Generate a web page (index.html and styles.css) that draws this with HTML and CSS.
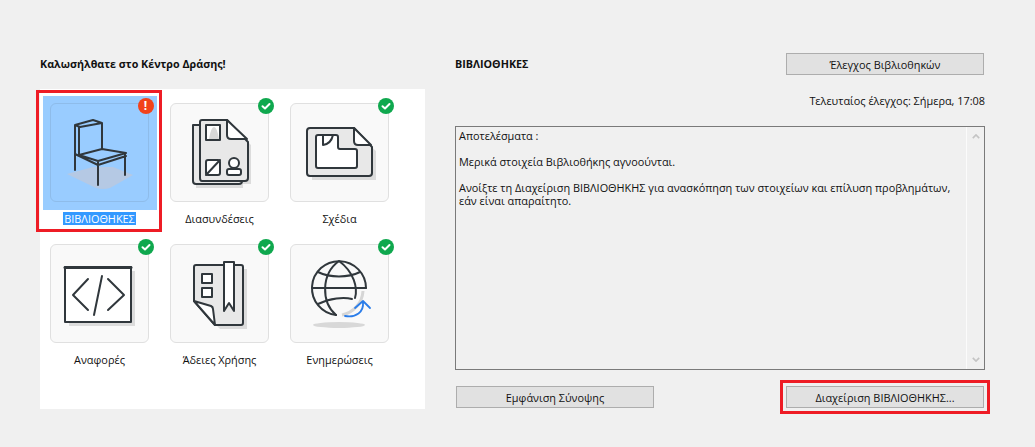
FILE: index.html
```html
<!DOCTYPE html>
<html lang="el">
<head>
<meta charset="utf-8">
<title>Κέντρο Δράσης</title>
<link rel="stylesheet" href="styles.css">
</head>
<body>
<main class="page">
  <section class="left">
    <h1 class="title left-title">Καλωσήλθατε στο Κέντρο Δράσης!</h1>
    <div class="panel">
      <div class="tile selected">
        <div class="card">
          <svg class="icon" viewBox="0 0 99 99">
            <path class="shadow-chair" d="M17 71 43 64H63L83 72 60 85Q53 87 46 85Z"/>
            <g class="ln">
              <path d="M25 22 43 17 52 20 30 24ZM25 22V67M29 24V52M52 20V46"/>
              <path d="M29 52 52 46 76 50 48 58ZM25 51 48 62 76 53M48 58V62M48 62V82M75 51V72"/>
            </g>
          </svg>
          <span class="badge badge-err">!</span>
        </div>
        <span class="label"><span class="label-sel">ΒΙΒΛΙΟΘΗΚΕΣ</span></span>
        <span class="redbox"></span>
      </div>
      <div class="tile">
        <div class="card">
          <svg class="icon" viewBox="0 0 99 99">
            <path class="sh" d="M33 21H59L81 42V81H73V85H26V81H33Z"/>
            <g class="ln">
              <path class="fg" d="M30 22H23V78Q23 81 26 81H69Q72 81 72 78"/>
              <path class="fg" d="M32 17H57L78 39V75Q78 78 75 78H32Q30 78 30 75V19Q30 17 32 17Z"/>
              <path class="fw" d="M57 17V32Q57 36 61 36H77Z"/>
              <rect class="fw" x="36" y="22" width="14" height="15"/>
              <rect class="fw" x="36" y="57" width="14" height="15" rx="2"/>
              <path d="M36 72 50 57"/>
              <circle class="fw" cx="64" cy="60" r="5"/>
              <rect class="fw" x="57" y="66" width="14" height="6" rx="2"/>
            </g>
            <path class="gr" d="M39 36Q41 24 44 24 47 24 49 36Z"/>
          </svg>
          <span class="badge badge-ok"><svg viewBox="0 0 16 16"><path d="M4.5 8.2 7 10.5 11.5 6"/></svg></span>
        </div>
        <span class="label">Διασυνδέσεις</span>
      </div>
      <div class="tile">
        <div class="card">
          <svg class="icon" viewBox="0 0 99 99">
            <path class="sh" d="M22 30H66L86 48V77H22Z"/>
            <g class="ln">
              <path class="fg" d="M20 25H64L82 44V70Q82 73 79 73H20Q17 73 17 70V28Q17 25 20 25Z"/>
              <path class="fw" d="M64 25V38Q64 42 68 42H81Z"/>
              <path class="fw" d="M28 32H46Q48 32 48 34V44Q48 46 50 46H65Q67 46 67 48V63Q67 65 65 65H28Q26 65 26 63V34Q26 32 28 32Z"/>
              <path d="M33 32V42Q41 41 43 32"/>
            </g>
          </svg>
          <span class="badge badge-ok"><svg viewBox="0 0 16 16"><path d="M4.5 8.2 7 10.5 11.5 6"/></svg></span>
        </div>
        <span class="label">Σχέδια</span>
      </div>
      <div class="tile">
        <div class="card">
          <svg class="icon" viewBox="0 0 99 99">
            <rect class="sh" x="19" y="27" width="66" height="55"/>
            <rect class="fw ln" x="15" y="23" width="66" height="55"/>
            <path class="ln ln-top" d="M15 23.5H81"/>
            <path class="ln" d="M38 35 23 51 38 66M58 35 74 51 58 66M52 32 44 71"/>
          </svg>
          <span class="badge badge-ok"><svg viewBox="0 0 16 16"><path d="M4.5 8.2 7 10.5 11.5 6"/></svg></span>
        </div>
        <span class="label">Αναφορές</span>
      </div>
      <div class="tile">
        <div class="card">
          <svg class="icon" viewBox="0 0 99 99">
            <path class="sh" d="M28 25H77V85H50L28 62Z"/>
            <g class="ln">
              <path class="fg" d="M26 21H71Q73 21 73 23V79Q73 81 71 81H45L24 57V23Q24 21 26 21Z"/>
              <path class="fw" d="M24 57 41 62Q43 63 43 65L45 81Z"/>
              <path class="fw" d="M54 18H64V67L59 59 54 67Z"/>
              <rect class="fw" x="32" y="30" width="10" height="9"/>
              <rect class="fw" x="32" y="44" width="10" height="9"/>
            </g>
          </svg>
          <span class="badge badge-ok"><svg viewBox="0 0 16 16"><path d="M4.5 8.2 7 10.5 11.5 6"/></svg></span>
        </div>
        <span class="label">Άδειες Χρήσης</span>
      </div>
      <div class="tile">
        <div class="card">
          <svg class="icon" viewBox="0 0 99 99">
            <ellipse class="gr" cx="49" cy="81" rx="26" ry="3"/>
            <path class="globe-sh" d="M73 47A26 26 0 0 1 52 71"/>
            <g class="ln">
              <path d="M46 71A27 27 0 1 1 76 44"/>
              <path d="M49 17C31 30 31 58 46 71M49 17C64 28 68 44 65 54"/>
              <path d="M22 44H76M28 28C40 34 58 34 70 28M28 60C40 54 54 53 62 55"/>
            </g>
            <path class="blue" d="M55 72C66 74 74 68 73 58M65 64 73 57 80 64"/>
          </svg>
          <span class="badge badge-ok"><svg viewBox="0 0 16 16"><path d="M4.5 8.2 7 10.5 11.5 6"/></svg></span>
        </div>
        <span class="label">Ενημερώσεις</span>
      </div>
    </div>
  </section>
  <section class="right">
    <div class="head-row">
      <h2 class="title">ΒΙΒΛΙΟΘΗΚΕΣ</h2>
      <button class="btn">Έλεγχος Βιβλιοθηκών</button>
    </div>
    <p class="last">Τελευταίος έλεγχος: Σήμερα, 17:08</p>
    <div class="results">
      <div class="results-text">
        <p>Αποτελέσματα :</p>
        <p>Μερικά στοιχεία Βιβλιοθήκης αγνοούνται.</p>
        <p>Ανοίξτε τη Διαχείριση ΒΙΒΛΙΟΘΗΚΗΣ για ανασκόπηση των στοιχείων και επίλυση προβλημάτων,<br>εάν είναι απαραίτητο.</p>
      </div>
      <div class="scroll">
        <svg viewBox="0 0 10 6"><path d="M1 5 5 1 9 5"/></svg>
        <svg viewBox="0 0 10 6"><path d="M1 1 5 5 9 1"/></svg>
      </div>
    </div>
    <div class="foot-row">
      <button class="btn">Εμφάνιση Σύνοψης</button>
      <button class="btn btn-marked">Διαχείριση ΒΙΒΛΙΟΘΗΚΗΣ...</button>
    </div>
  </section>
</main>
</body>
</html>
```
FILE: styles.css
```css
* { box-sizing: border-box; }
html, body { margin: 0; height: 100%; }
body {
  background: #f0f0f0;
  color: #111;
  font-family: "Open Sans", "Noto Sans", sans-serif;
  font-size: 10.9px;
  overflow: hidden;
}
.page { display: flex; padding: 53px 50px 0 40px; gap: 30px; }
.left { width: 385px; flex: none; }
.right { width: 530px; flex: none; }
.title { margin: 0; font-size: 10.75px; font-weight: 700; line-height: 22px; color: #111; }
.left-title { margin-bottom: 14px; }
.panel {
  background: #fff;
  height: 320px;
  padding: 14px 0 0 10px;
  display: grid;
  grid-template-columns: repeat(3, 120px);
  grid-auto-rows: 141px;
}
.tile { position: relative; isolation: isolate; width: 99px; display: flex; flex-direction: column; align-items: center; }
.card {
  position: relative;
  width: 99px;
  height: 99px;
  flex: none;
  background: #f9f9f9;
  border: 1.5px solid #e0e0e0;
  border-radius: 6px;
}
.icon { display: block; width: 99px; height: 99px; margin: -1.5px; overflow: visible; }
.selected .card {
  background: transparent;
  border-color: #8ebcea;
}
.selected .card::before {
  content: "";
  position: absolute;
  inset: -8.5px;
  background: #99ccff;
  z-index: -1;
}
.ln { fill: none; stroke: #30373c; stroke-width: 2; stroke-linejoin: round; stroke-linecap: round; }
.ln-top { stroke-width: 3; }
.fg { fill: #e8e8e8; }
.fw { fill: #fff; }
.ln .fg { fill: #e8e8e8; }
.sh { fill: #dcdcdc; }
.gr { fill: #d8d8d8; }
.shadow-chair { fill: #b5c9e4; }
.globe-sh { fill: none; stroke: #d6d6d6; stroke-width: 3; }
.blue { fill: none; stroke: #2b7de9; stroke-width: 1.8; stroke-linecap: round; stroke-linejoin: round; }
.badge {
  position: absolute;
  top: -6px;
  left: 86.5px;
  width: 16px;
  height: 16px;
  border-radius: 50%;
  color: #fff;
  font-weight: 700;
  font-size: 12px;
  line-height: 16px;
  text-align: center;
}
.badge svg { display: block; width: 16px; height: 16px; fill: none; stroke: #fff; stroke-width: 2; stroke-linecap: round; stroke-linejoin: round; }
.badge-err { background: #f2421b; }
.badge-ok { background: #0fa84e; }
.label { margin-top: 10px; white-space: nowrap; line-height: 13px; text-align: center; }
.label-sel { display: inline-block; background: #3399ff; color: #fff; padding: 0 1px; }
.redbox {
  position: absolute;
  left: -14px;
  top: -13px;
  width: 126px;
  height: 142px;
  border: 3px solid #ee1c25;
  pointer-events: none;
}
.head-row { display: flex; justify-content: space-between; align-items: center; padding-right: 1px; }
.btn {
  width: 198px;
  height: 22px;
  padding: 0;
  background: #e1e1e1;
  border: 1px solid #adadad;
  font: inherit;
  color: #111;
}
.last { margin: 19px 0 0; line-height: 14px; text-align: right; }
.results {
  margin-top: 18px;
  height: 244px;
  border: 1px solid #7a7a7a;
  display: flex;
  padding-left: 3px;
}
.results-text { flex: 1; padding-top: 2px; line-height: 13px; }
.results-text p { margin: 0 0 13px; }
.scroll {
  width: 18px;
  border-left: 1px solid #fbfbfb;
  display: flex;
  flex-direction: column;
  justify-content: space-between;
  align-items: center;
  padding: 7px 0;
}
.scroll svg { width: 8px; height: 5px; fill: none; stroke: #c4c4c4; stroke-width: 2; }
.foot-row { display: flex; justify-content: space-between; margin-top: 16px; padding: 0 1px; }
.btn-marked { outline: 3px solid #ee1c25; outline-offset: 3px; }
```
